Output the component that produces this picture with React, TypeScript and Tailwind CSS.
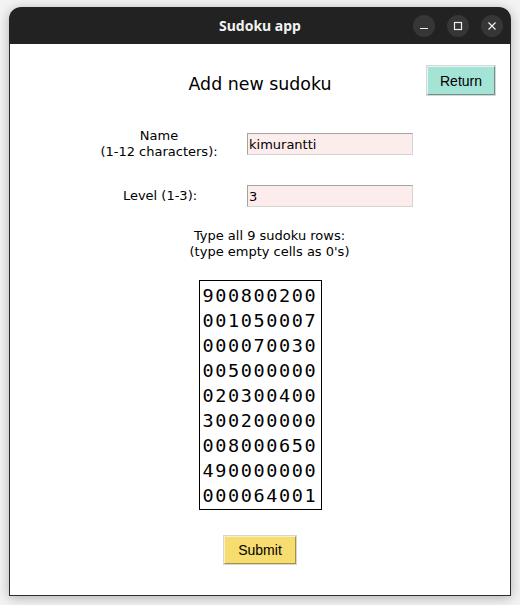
import React from 'react';

const rows = [
    '900800200',
    '001050007',
    '000070030',
    '005000000',
    '020300400',
    '300200000',
    '008000650',
    '490000000',
    '000064001',
];

const sans = "font-['DejaVu_Sans','Liberation_Sans',sans-serif]";

function TitleButton({ children }: { children: React.ReactNode }) {
    return (
        <div className="w-[22px] h-[22px] rounded-full bg-[#363636] flex items-center justify-center">
            {children}
        </div>
    );
}

export default function App() {
    return (
        <div className="w-[520px] h-[605px] bg-[#f3f3f3] pt-[7px] pl-[9px] overflow-hidden">
            <div className="w-[502px] h-[589px] rounded-t-[12px] overflow-hidden flex flex-col shadow-[0_2px_12px_rgba(0,0,0,0.28)]">
                {/* Title bar */}
                <div className="relative h-[37px] shrink-0 bg-[#222222] flex items-center justify-center">
                    <span className="text-[14px] font-bold text-[#f2f2f2] font-['Noto_Sans','DejaVu_Sans',sans-serif] leading-none">
                        Sudoku app
                    </span>
                    <div className="absolute right-[8px] top-[8px] flex gap-[12px]">
                        <TitleButton>
                            <svg width="10" height="10" viewBox="0 0 10 10">
                                <path d="M1 7.5h8" stroke="#eeeeee" strokeWidth="1.2" />
                            </svg>
                        </TitleButton>
                        <TitleButton>
                            <svg width="10" height="10" viewBox="0 0 10 10">
                                <rect x="1.5" y="1.5" width="7" height="7" fill="none" stroke="#eeeeee" strokeWidth="1.2" />
                            </svg>
                        </TitleButton>
                        <TitleButton>
                            <svg width="10" height="10" viewBox="0 0 10 10">
                                <path d="M1.5 1.5l7 7M8.5 1.5l-7 7" stroke="#eeeeee" strokeWidth="1.2" />
                            </svg>
                        </TitleButton>
                    </div>
                </div>

                {/* Body */}
                <div className={`flex-1 bg-white border-x border-b border-[#2e2e2e] flex flex-col text-black ${sans}`}>
                    {/* Header row */}
                    <div className="mt-[22px] grid grid-cols-[1fr_auto_1fr] items-start">
                        <div />
                        <h1 className="mt-[8px] text-[17.4px] leading-[20px] font-normal">Add new sudoku</h1>
                        <div className="flex justify-end pr-[15px]">
                            <button className="w-[68px] h-[29px] bg-[#a3e4d7] border border-t-[#e4f6f2] border-l-[#e4f6f2] border-b-[#6f8f88] border-r-[#6f8f88] shadow-[0_0_0_1px_#d6d6d6] text-[14px] font-['Liberation_Sans',sans-serif] leading-none">
                                Return
                            </button>
                        </div>
                    </div>

                    {/* Name */}
                    <div className="mt-[33px] flex items-center">
                        <label className="ml-[84px] w-[130px] text-center text-[13px] leading-[16px]">
                            Name
                            <br />
                            (1-12 characters):
                        </label>
                        <input
                            type="text"
                            defaultValue="kimurantti"
                            className="ml-[23px] w-[166px] h-[22px] px-[1px] bg-[#fdecec] border border-[#a3a3a3] border-b-[#d4d4d4] border-r-[#d4d4d4] text-[13px] leading-[20px] outline-none"
                        />
                    </div>

                    {/* Level */}
                    <div className="mt-[25px] flex items-center">
                        <label className="ml-[84px] w-[130px] text-center text-[13px] leading-[16px] pl-[2px]">Level (1-3):</label>
                        <input
                            type="text"
                            defaultValue="3"
                            className="ml-[23px] w-[166px] h-[22px] px-[1px] bg-[#fdecec] border border-[#a3a3a3] border-b-[#d4d4d4] border-r-[#d4d4d4] text-[13px] leading-[20px] outline-none"
                        />
                    </div>

                    {/* Instructions */}
                    <p className="mt-[21px] pl-[19px] text-center text-[13px] leading-[16px]">
                        Type all 9 sudoku rows:
                        <br />
                        (type empty cells as 0's)
                    </p>

                    {/* Sudoku rows */}
                    <div className="mt-[20px] flex justify-center">
                        <textarea
                            wrap="off"
                            defaultValue={rows.join('\n')}
                            className="w-[123px] h-[230px] border border-black pl-[3px] pt-[2px] pr-0 pb-0 resize-none overflow-hidden font-['DejaVu_Sans_Mono',monospace] text-[18.5px] tracking-[1.6px] leading-[25px] text-black outline-none"
                        />
                    </div>

                    {/* Submit */}
                    <div className="mt-[26px] flex justify-center">
                        <button className="w-[72px] h-[28px] bg-[#f7dc6f] border border-t-[#fbf0c4] border-l-[#fbf0c4] border-b-[#a39247] border-r-[#a39247] shadow-[0_0_0_1px_#d6d6d6] text-[14px] font-['Liberation_Sans',sans-serif] leading-none">
                            Submit
                        </button>
                    </div>
                </div>
            </div>
        </div>
    );
}
